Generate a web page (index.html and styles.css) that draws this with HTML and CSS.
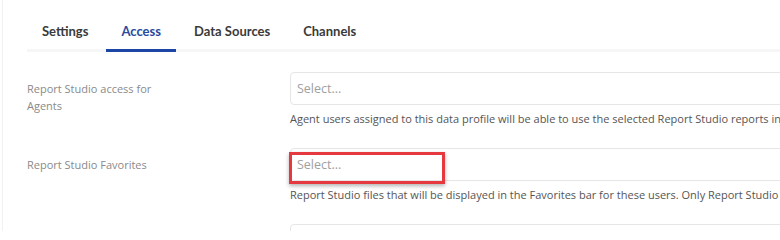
FILE: index.html
```html
<!DOCTYPE html>
<html>
<head>
<meta charset="utf-8">
<link rel="stylesheet" href="styles.css">
</head>
<body>
<div class="page">
  <nav class="tabs">
    <div class="tab">Settings</div>
    <div class="tab active">Access</div>
    <div class="tab">Data Sources</div>
    <div class="tab">Channels</div>
  </nav>
  <div class="form">
    <div class="row">
      <div class="label">Report Studio access for Agents</div>
      <div class="field">
        <div class="select">Select...</div>
        <div class="help">Agent users assigned to this data profile will be able to use the selected Report Studio reports in the Agent Desktop.</div>
      </div>
    </div>
    <div class="row">
      <div class="label">Report Studio Favorites</div>
      <div class="field">
        <div class="select">Select...<span class="mark"></span></div>
        <div class="help">Report Studio files that will be displayed in the Favorites bar for these users. Only Report Studio files selected above can be used.</div>
      </div>
    </div>
    <div class="row">
      <div class="label"></div>
      <div class="field">
        <div class="select"></div>
      </div>
    </div>
  </div>
</div>
</body>
</html>
```

FILE: styles.css
```css
html, body {
  margin: 0;
  padding: 0;
  background: #ffffff;
  overflow: hidden;
}
body {
  width: 780px;
  height: 231px;
  font-family: "Open Sans", "Noto Sans", sans-serif;
}
.page {
  margin-left: 2px;
  border-left: 1px solid #f1f1f1;
  height: 231px;
  padding-left: 24px;
  box-sizing: border-box;
  overflow: hidden;
}
.tabs {
  display: flex;
  gap: 3px;
  padding-top: 14px;
  border-bottom: 3px solid #f6f6f6;
}
.tab {
  padding: 9px 15px 10px;
  font-family: "Lato", sans-serif;
  font-size: 13px;
  font-weight: 700;
  color: #3a3a3a;
  margin-bottom: -3px;
  border-bottom: 3px solid transparent;
  line-height: 16px;
}
.tab.active {
  color: #2a4aa0;
  border-bottom-color: #1d45a6;
}
.form {
  padding-top: 20px;
}
.row {
  display: flex;
  margin-bottom: 21px;
}
.label {
  flex: none;
  width: 140px;
  margin-right: 123px;
  padding-top: 8px;
  font-size: 11px;
  line-height: 17px;
  color: #8a8a8a;
}
.field {
  flex: none;
  width: 620px;
}
.select {
  position: relative;
  height: 33px;
  box-sizing: border-box;
  border: 1px solid #e6e6e6;
  border-radius: 4px;
  padding: 8px 6px;
  font-size: 12.5px;
  line-height: 16px;
  color: #a0a0a0;
}
.help {
  margin-top: 6px;
  font-size: 11px;
  line-height: 16px;
  color: #555555;
  white-space: nowrap;
}
.mark {
  position: absolute;
  left: -2px;
  top: 3px;
  width: 150px;
  height: 26px;
  border: 3px solid #e5383f;
  box-shadow: 0 2px 4px rgba(0,0,0,0.3);
}
```
